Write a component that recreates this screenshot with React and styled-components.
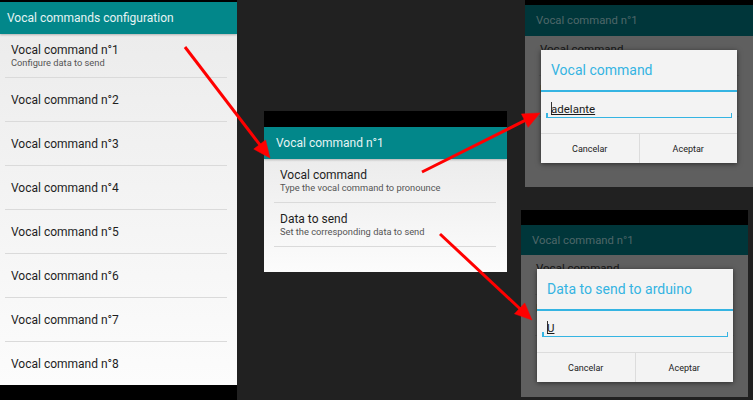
import React from "react";
import styled, { createGlobalStyle } from "styled-components";

const Global = createGlobalStyle`
  html, body { margin: 0; padding: 0; background: #212121; }
  body { font-family: Roboto, "Noto Sans", Arial, sans-serif; }
  * { box-sizing: border-box; }
`;

const Canvas = styled.div`
  position: relative;
  width: 753px;
  height: 400px;
  background: #212121;
  overflow: hidden;
`;

const Screen = styled.div`
  position: absolute;
  left: ${(p) => p.$x}px;
  top: ${(p) => p.$y}px;
  width: ${(p) => p.$w}px;
  height: ${(p) => p.$h}px;
  display: flex;
  flex-direction: column;
  overflow: hidden;
`;

const BlackBar = styled.div`
  flex: 0 0 ${(p) => p.$h}px;
  background: #000;
`;

const AppBar = styled.div`
  flex: 0 0 ${(p) => p.$h}px;
  display: flex;
  align-items: center;
  padding-left: ${(p) => p.$pad}px;
  background: ${(p) => (p.$dim ? "#00363a" : "#02878a")};
  color: ${(p) => (p.$dim ? "#4f6769" : "#e6f4f4")};
  font-size: ${(p) => p.$size}px;
  box-shadow: ${(p) => (p.$dim ? "none" : "0 1px 2px rgba(0,0,0,0.25)")};
  position: relative;
  z-index: 1;
  white-space: nowrap;
`;

const List = styled.div`
  flex: 1;
  display: flex;
  flex-direction: column;
  background: linear-gradient(#ececec, #fcfcfc);
  overflow: hidden;
`;

const Item = styled.div`
  flex: 0 0 ${(p) => p.$h}px;
  margin: 0 ${(p) => p.$mr}px 0 ${(p) => p.$ml}px;
  padding-left: 6px;
  display: flex;
  flex-direction: column;
  justify-content: center;
  border-bottom: 1px solid ${(p) => (p.$last ? "transparent" : "#dadada")};
`;

const Title = styled.div`
  font-size: 12px;
  line-height: 14px;
  color: #1e1e1e;
  white-space: nowrap;
`;

const Sub = styled.div`
  font-size: 9.3px;
  line-height: 12px;
  color: #555;
  white-space: nowrap;
`;

const DimContent = styled.div`
  flex: 1;
  position: relative;
  background: #5f5f5f;
`;

const BehindItem = styled.div`
  height: ${(p) => p.$h}px;
  margin-left: 14px;
  margin-right: 14px;
  padding: 7px 0 0 1px;
  line-height: 13px;
  border-bottom: 1px solid #565656;
  color: #161616;
  font-size: 11.5px;
  white-space: nowrap;
`;

const Dialog = styled.div`
  position: absolute;
  left: 16px;
  top: 14px;
  width: 196px;
  background: #f3f3f3;
  box-shadow: 0 1px 5px rgba(0, 0, 0, 0.55);
  display: flex;
  flex-direction: column;
`;

const DialogTitle = styled.div`
  height: ${(p) => p.$h}px;
  display: flex;
  align-items: center;
  padding-left: 10px;
  color: #35b4e2;
  font-size: 14px;
  white-space: nowrap;
`;

const BlueRule = styled.div`
  height: 2px;
  background: #35b4e2;
`;

const InputArea = styled.div`
  height: 41px;
  padding: 0 5px;
  display: flex;
  flex-direction: column;
`;

const InputField = styled.div`
  margin-top: 8px;
  height: 18px;
  position: relative;
  padding-left: 5px;
  display: flex;
  align-items: center;
  border-bottom: 1.5px solid #35b4e2;
  &::before,
  &::after {
    content: "";
    position: absolute;
    bottom: 0;
    width: 1.5px;
    height: 4px;
    background: #35b4e2;
  }
  &::before { left: 0; }
  &::after { right: 0; }
`;

const Caret = styled.span`
  display: inline-block;
  width: 1px;
  height: 13px;
  background: #333;
  margin-right: -1px;
`;

const TypedText = styled.span`
  font-size: 11.5px;
  color: #1a1a1a;
  text-decoration: underline;
  text-underline-offset: 1px;
  text-decoration-thickness: 1px;
`;

const ButtonRow = styled.div`
  height: 30px;
  display: flex;
  border-top: 1px solid #dcdcdc;
`;

const DialogButton = styled.div`
  flex: 1;
  display: flex;
  align-items: center;
  justify-content: center;
  font-size: 9px;
  color: #222;
  border-left: ${(p) => (p.$second ? "1px solid #dcdcdc" : "none")};
`;

const Arrows = styled.svg`
  position: absolute;
  left: 0;
  top: 0;
  z-index: 10;
  pointer-events: none;
`;

function Arrow({ x1, y1, x2, y2 }) {
  const dx = x2 - x1;
  const dy = y2 - y1;
  const len = Math.hypot(dx, dy);
  const ux = dx / len;
  const uy = dy / len;
  const hl = 17;
  const hw = 7.5;
  const bx = x2 - ux * hl;
  const by = y2 - uy * hl;
  const px = -uy * hw;
  const py = ux * hw;
  const pts = `${x2},${y2} ${bx + px},${by + py} ${bx - px},${by - py}`;
  return (
    <g fill="#ff0000" stroke="#ff0000">
      <line x1={x1} y1={y1} x2={bx + ux * 2} y2={by + uy * 2} strokeWidth="3" />
      <polygon points={pts} strokeWidth="0.5" strokeLinejoin="miter" />
    </g>
  );
}

function InputDialog({ title, value, titleH }) {
  return (
    <Dialog>
      <DialogTitle $h={titleH}>{title}</DialogTitle>
      <BlueRule />
      <InputArea>
        <InputField>
          <Caret />
          <TypedText>{value}</TypedText>
        </InputField>
      </InputArea>
      <ButtonRow>
        <DialogButton>Cancelar</DialogButton>
        <DialogButton $second>Aceptar</DialogButton>
      </ButtonRow>
    </Dialog>
  );
}

function DimScreen({ x, y, w, h, statusH, headerH, title, value }) {
  return (
    <Screen $x={x} $y={y} $w={w} $h={h}>
      <BlackBar $h={statusH} />
      <AppBar $h={headerH} $pad={11} $size={11.3} $dim>
        Vocal command n°1
      </AppBar>
      <DimContent>
        <BehindItem $h={40}>Vocal command</BehindItem>
        <BehindItem $h={41}>Data to send</BehindItem>
        <InputDialog title={title} value={value} titleH={40} />
      </DimContent>
    </Screen>
  );
}

export default function App() {
  const commands = [1, 2, 3, 4, 5, 6, 7, 8];
  return (
    <>
      <Global />
      <Canvas>
        <Screen $x={0} $y={0} $w={237} $h={400}>
          <BlackBar $h={2} />
          <AppBar $h={32} $pad={7} $size={12}>
            Vocal commands configuration
          </AppBar>
          <List>
            {commands.map((n, i) => (
              <Item key={n} $h={44} $ml={5} $mr={10} $last={i === commands.length - 1}>
                <Title>Vocal command n°{n}</Title>
                {n === 1 && <Sub>Configure data to send</Sub>}
              </Item>
            ))}
          </List>
          <BlackBar $h={15} />
        </Screen>

        <Screen $x={264} $y={111} $w={243} $h={161}>
          <BlackBar $h={16} />
          <AppBar $h={32} $pad={12} $size={12}>
            Vocal command n°1
          </AppBar>
          <List>
            <Item $h={44} $ml={10} $mr={11}>
              <Title>Vocal command</Title>
              <Sub>Type the vocal command to pronounce</Sub>
            </Item>
            <Item $h={44} $ml={10} $mr={11}>
              <Title>Data to send</Title>
              <Sub>Set the corresponding data to send</Sub>
            </Item>
          </List>
        </Screen>

        <DimScreen
          x={525}
          y={0}
          w={228}
          h={187}
          statusH={5}
          headerH={31}
          title="Vocal command"
          value="adelante"
        />
        <DimScreen
          x={521}
          y={210}
          w={227}
          h={187}
          statusH={15}
          headerH={30}
          title="Data to send to arduino"
          value="U"
        />

        <Arrows width="753" height="400" viewBox="0 0 753 400">
          <Arrow x1={185} y1={47} x2={270} y2={158} />
          <Arrow x1={422} y1={172} x2={540} y2={113} />
          <Arrow x1={440} y1={234} x2={532} y2={320} />
        </Arrows>
      </Canvas>
    </>
  );
}
